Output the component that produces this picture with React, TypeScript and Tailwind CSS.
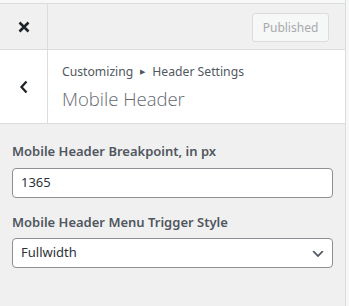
import React from "react";

export default function App() {
  const font = { fontFamily: '"Noto Sans", "Open Sans", sans-serif' };
  return (
    <div className="w-[349px] h-[306px] flex bg-[#f6f7f7] overflow-hidden" style={font}>
      <div className="w-[346px] h-full flex flex-col bg-[#f0f0f1] border-r border-[#dcdcde]">
        <div className="h-[3px] bg-[#f6f7f7] shrink-0" />
        {/* header */}
        <div className="h-[47px] shrink-0 flex border-y border-[#dcdcde] bg-[#f0f0f1]">
          <div className="w-[48px] h-full border-r border-[#dcdcde] flex items-center justify-center">
            <svg width="12" height="12" viewBox="0 0 12 12">
              <path d="M1.5 1.5 L10.5 10.5 M10.5 1.5 L1.5 10.5" stroke="#1d2327" strokeWidth="2.6" strokeLinecap="butt" />
            </svg>
          </div>
          <div className="flex-1 flex justify-end">
            <div className="mt-[9px] mr-[16px] w-[77px] h-[29px] rounded-[3px] border border-[#dcdcde] bg-[#f6f7f7] flex items-center justify-center text-[12px] text-[#a7aaad]">
              Published
            </div>
          </div>
        </div>
        {/* section title */}
        <div className="h-[74px] shrink-0 flex bg-white border-b border-[#dcdcde]">
          <div className="w-[48px] h-full border-r border-[#dcdcde] flex items-center justify-center">
            <svg width="10" height="14" viewBox="0 0 10 14" className="mt-[1px]">
              <path d="M7.5 1.5 L2.5 7 L7.5 12.5" fill="none" stroke="#1d2327" strokeWidth="2.3" />
            </svg>
          </div>
          <div className="pl-[14px] pt-[13px] flex flex-col">
            <div className="text-[12.2px] leading-[18px] text-[#50575e] flex items-center">
              <span>Customizing</span>
              <span className="mx-[7px] text-[7px] leading-[18px]">▶</span>
              <span>Header Settings</span>
            </div>
            <div
              className="mt-[4px] text-[18.5px] leading-[27px] font-light text-[#646970]"
              style={{ fontFamily: '"Open Sans", "Noto Sans", sans-serif' }}
            >
              Mobile Header
            </div>
          </div>
        </div>
        {/* controls */}
        <div className="px-[12px] pt-[17px] flex flex-col">
          <div className="text-[13px] leading-[20px] font-semibold text-[#50575e]">Mobile Header Breakpoint, in px</div>
          <div className="mt-[7px] h-[30px] rounded-[4px] border border-[#8c8f94] bg-white flex items-center px-[8px] text-[13px] text-[#2c3338]">
            1365
          </div>
          <div className="mt-[14px] text-[13px] leading-[20px] font-semibold text-[#50575e]">Mobile Header Menu Trigger Style</div>
          <div className="mt-[6px] h-[30px] rounded-[4px] border border-[#8c8f94] bg-white flex items-center pl-[8px] pr-[6px] text-[13px] text-[#2c3338]">
            <span className="flex-1">Fullwidth</span>
            <svg width="16" height="16" viewBox="0 0 20 20" className="mt-[1px]">
              <path d="M5 6l5 5 5-5 2 1-7 7-7-7 2-1z" fill="#50575e" />
            </svg>
          </div>
        </div>
      </div>
    </div>
  );
}
